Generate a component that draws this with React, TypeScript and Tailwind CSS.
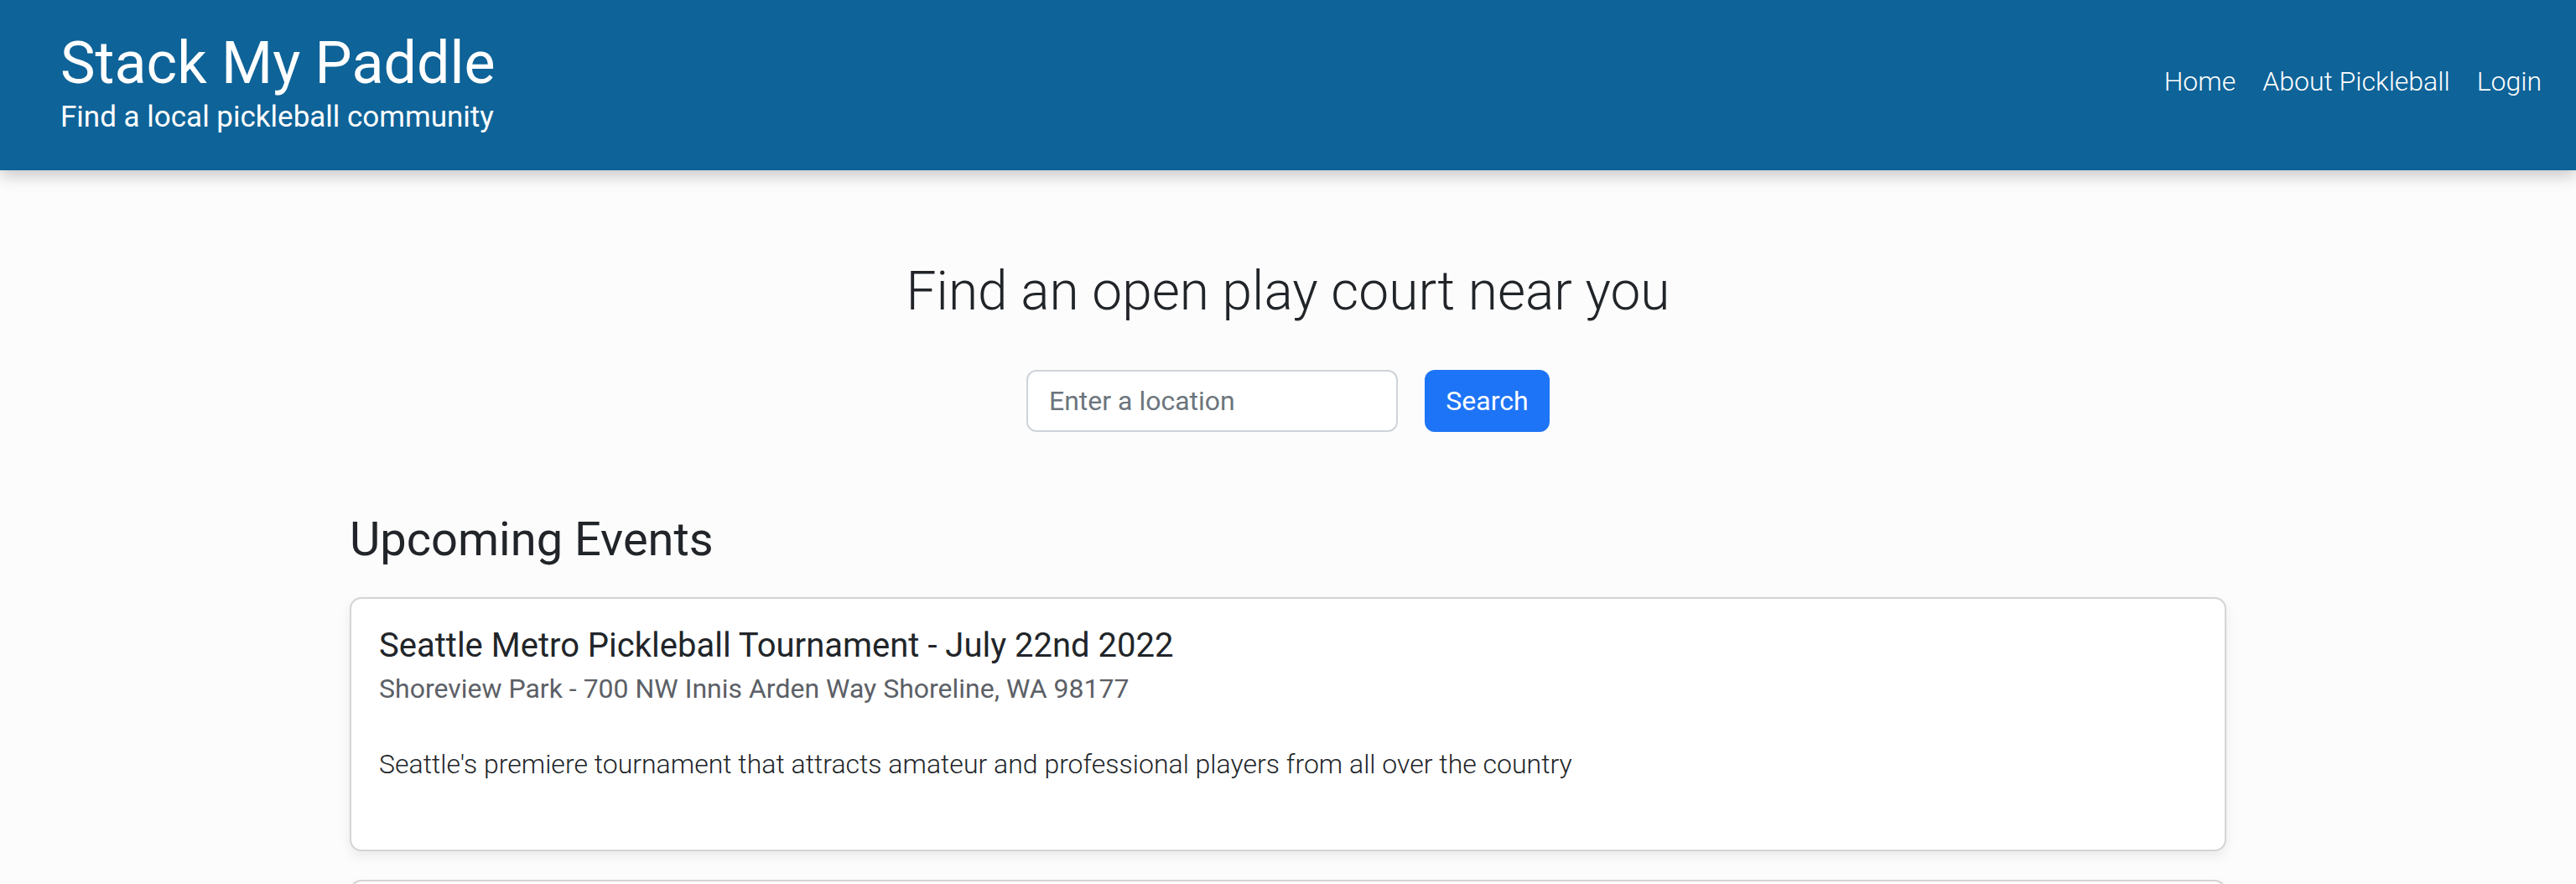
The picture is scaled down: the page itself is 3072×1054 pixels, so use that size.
const events = [
  {
    title: 'Seattle Metro Pickleball Tournament - July 22nd 2022',
    location: 'Shoreview Park - 700 NW Innis Arden Way Shoreline, WA 98177',
    description:
      "Seattle's premiere tournament that attracts amateur and professional players from all over the country",
  },
];

function Header() {
  return (
    <header className="relative z-10 flex h-[203px] justify-between bg-[#0e6398] pl-[72px] pr-[25px] text-white shadow-[0_6px_18px_rgba(0,0,0,0.22)]">
      <div className="flex flex-col pt-[33px]">
        <h1 className="text-[70px] leading-[1.2] font-normal">Stack My Paddle</h1>
        <p className="mt-[2px] text-[35px] leading-[1.2]">Find a local pickleball community</p>
      </div>
      <nav className="flex pt-[73px] text-[32px] leading-[1.5] font-light">
        <a className="px-[16px]">Home</a>
        <a className="px-[16px]">About Pickleball</a>
        <a className="px-[16px]">Login</a>
      </nav>
    </header>
  );
}

function Search() {
  return (
    <section className="flex flex-col items-center pt-[107px]">
      <h2 className="text-[64px] leading-[1.2] font-light text-[#212529]">
        Find an open play court near you
      </h2>
      <div className="mt-[54px] flex gap-[32px]">
        <input
          placeholder="Enter a location"
          className="h-[74px] w-[443px] rounded-[12px] border-2 border-[#ced4da] bg-white px-[25px] text-[32px] text-[#212529] outline-none placeholder:text-[#6c757d]"
        />
        <button className="h-[74px] w-[149px] rounded-[12px] bg-[#1e74f6] text-[32px] text-white">
          Search
        </button>
      </div>
    </section>
  );
}

export default function App() {
  return (
    <div className="min-h-screen bg-[#fcfcfc] font-['Roboto',sans-serif] text-[#212529]">
      <Header />
      <Search />
      <main className="mx-auto w-[2238px] pt-[95px]">
        <h3 className="text-[56px] leading-[1.2] font-normal">Upcoming Events</h3>
        <div className="mt-[35px] flex flex-col gap-[34px]">
          {events.map((e) => (
            <div
              key={e.title}
              className="h-[303px] rounded-[14px] border-2 border-[#d4d4d4] bg-white px-[33px] pt-[32px] shadow-[0_6px_14px_rgba(0,0,0,0.07)]"
            >
              <h5 className="text-[40px] leading-[1.2] font-normal">{e.title}</h5>
              <h6 className="mt-[8px] text-[32px] leading-[1.2] text-[#5c6066]">{e.location}</h6>
              <p className="mt-[47px] text-[32px] leading-[1.5] font-light">{e.description}</p>
            </div>
          ))}
          {/* next card, only its top edge is in view */}
          <div className="h-[303px] rounded-[14px] border-2 border-[#d4d4d4] bg-white shadow-[0_6px_14px_rgba(0,0,0,0.07)]" />
        </div>
      </main>
    </div>
  );
}
